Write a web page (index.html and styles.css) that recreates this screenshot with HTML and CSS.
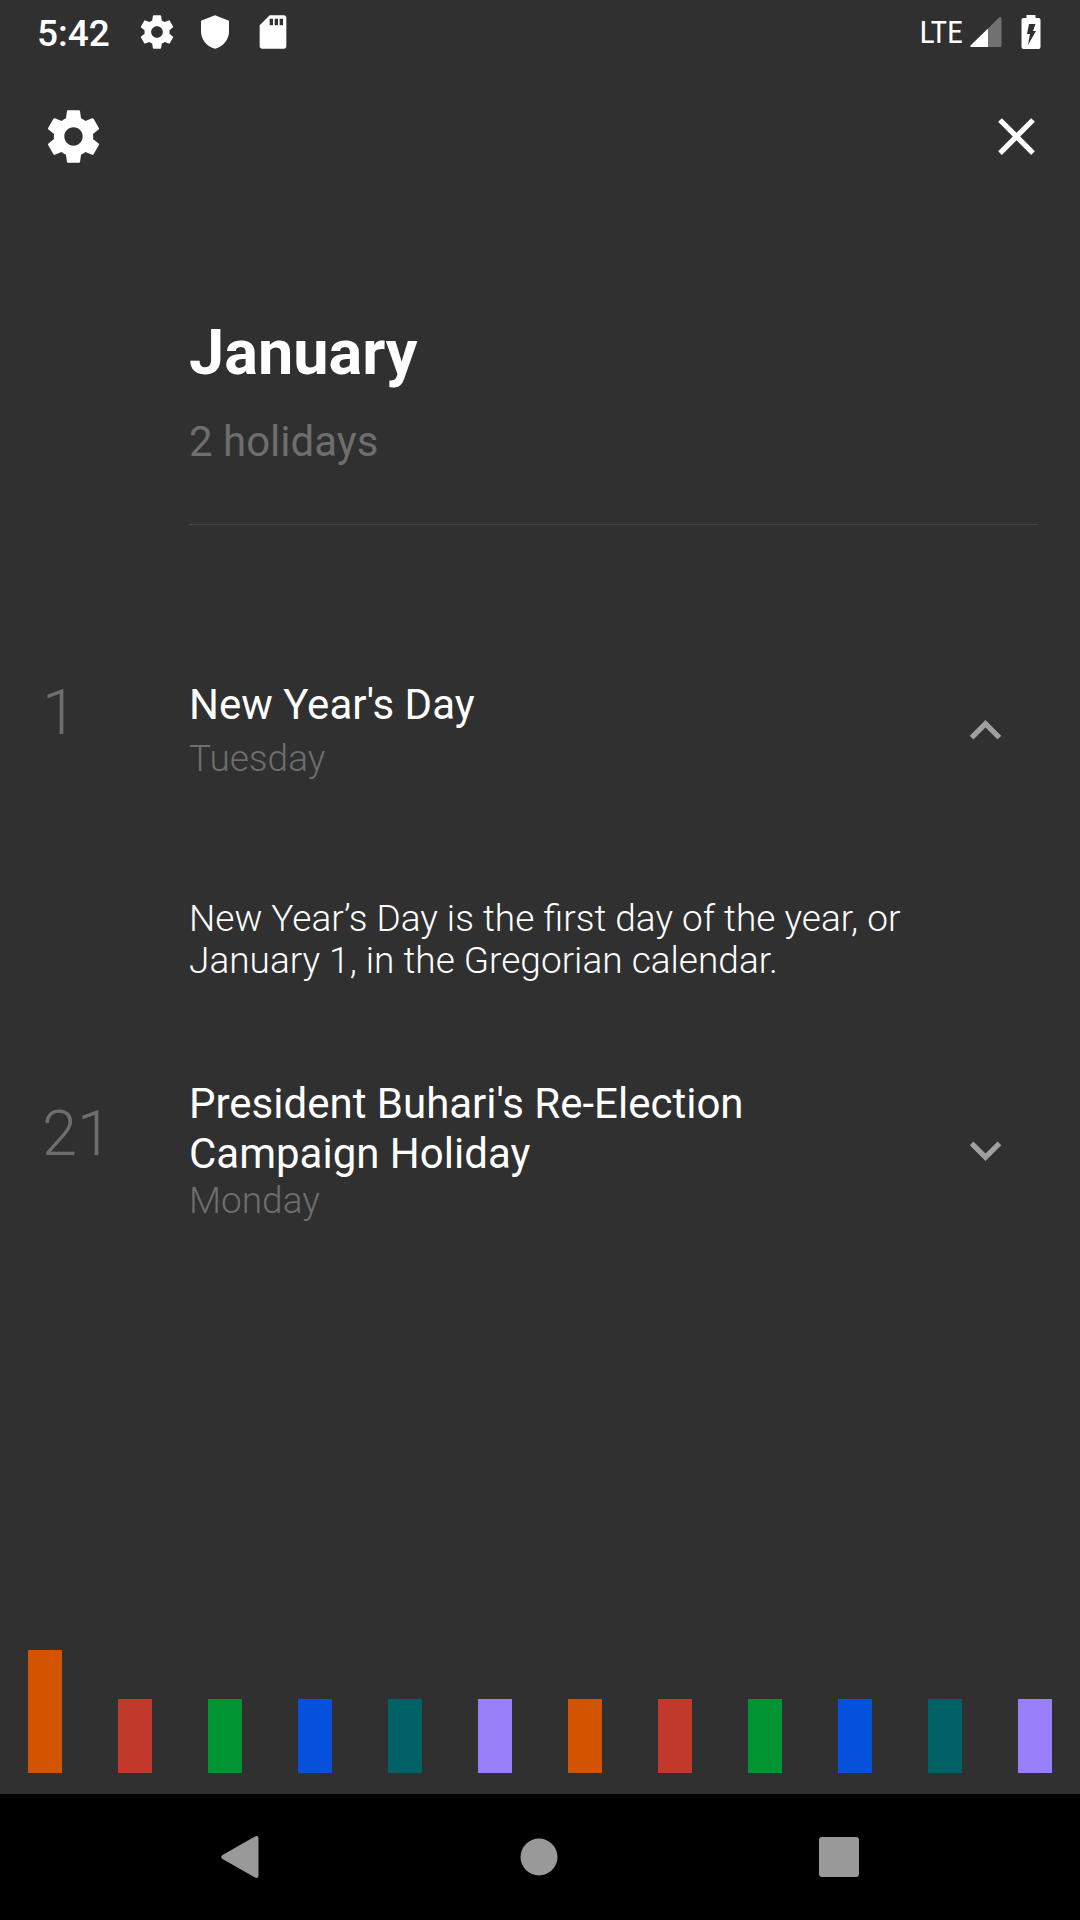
FILE: index.html
```html
<!DOCTYPE html>
<html lang="en">
<head>
<meta charset="utf-8">
<meta name="viewport" content="width=device-width, initial-scale=1">
<title>January holidays</title>
<link rel="stylesheet" href="styles.css">
</head>
<body>
<div class="screen">
  <header class="status-bar">
    <time class="clock">5:42</time>
    <div class="status-icons">
      <svg class="status-icon" viewBox="0 0 24 24" aria-hidden="true"><path d="M19.43 12.98c.04-.32.07-.64.07-.98s-.03-.66-.07-.98l2.11-1.65c.19-.15.24-.42.12-.64l-2-3.46c-.12-.22-.39-.3-.61-.22l-2.49 1c-.52-.4-1.08-.73-1.69-.98l-.38-2.65C14.46 2.18 14.25 2 14 2h-4c-.25 0-.46.18-.49.42l-.38 2.65c-.61.25-1.17.59-1.69.98l-2.49-1c-.23-.09-.49 0-.61.22l-2 3.46c-.13.22-.07.49.12.64l2.11 1.65c-.04.32-.07.65-.07.98s.03.66.07.98l-2.11 1.65c-.19.15-.24.42-.12.64l2 3.46c.12.22.39.3.61.22l2.49-1c.52.4 1.08.73 1.69.98l.38 2.65c.03.24.24.42.49.42h4c.25 0 .46-.18.49-.42l.38-2.65c.61-.25 1.17-.59 1.69-.98l2.49 1c.23.09.49 0 .61-.22l2-3.46c.12-.22.07-.49-.12-.64l-2.11-1.65zM12 15.5c-1.93 0-3.5-1.57-3.5-3.5s1.57-3.5 3.5-3.5 3.5 1.57 3.5 3.5-1.57 3.5-3.5 3.5z"/></svg>
      <svg class="status-icon" viewBox="0 0 24 24" aria-hidden="true"><path d="M12 2L3.6 5.2v6.3c0 4.900 3.400 9.200 8.400 10.500 5-1.300 8.400-5.600 8.400-10.500V5.200z"/></svg>
      <svg class="status-icon" viewBox="0 0 24 24" aria-hidden="true"><path fill-rule="evenodd" d="M18.500 2H10L4 8v12.500c0 .9.600 1.500 1.500 1.500h13c.9 0 1.500-.6 1.500-1.500v-17c0-.9-.6-1.500-1.500-1.500zM12 8h-2V4h2zm3 0h-2V4h2zm3 0h-2V4h2z"/></svg>
    </div>
    <span class="network">LTE</span>
    <svg class="signal" viewBox="0 0 32 32" role="img" aria-label="Signal strength"><path class="signal-off" d="M18 12.500L29 1.500Q31.500 0 31.500 2.500V29.500Q31.500 31 30 31H18z"/><path d="M18 12.500V31H1.500Q-.5 31 .5 29.500z"/></svg>
    <svg class="battery" viewBox="0 0 20 34" role="img" aria-label="Battery charging"><path fill-rule="evenodd" d="M5.500 0h9v3h3q2 0 2 2v27q0 2-2 2H2.500q-2 0-2-2V5q0-2 2-2h3zM8 9L6 19h3L7 30l8-14h-3l2.500-7z"/></svg>
  </header>

  <nav class="app-bar">
    <button class="icon-button" type="button" aria-label="Settings">
      <svg class="icon" viewBox="0 0 24 24" aria-hidden="true"><path d="M19.43 12.98c.04-.32.07-.64.07-.98s-.03-.66-.07-.98l2.11-1.65c.19-.15.24-.42.12-.64l-2-3.46c-.12-.22-.39-.3-.61-.22l-2.490 1c-.52-.4-1.080-.73-1.690-.98l-.38-2.650C14.460 2.180 14.250 2 14 2h-4c-.25 0-.46.18-.49.42l-.38 2.650c-.61.25-1.170.59-1.690.98l-2.490-1c-.23-.09-.49 0-.61.22l-2 3.460c-.13.22-.07.49.12.64l2.110 1.650c-.04.32-.07.65-.07.98s.03.66.07.98l-2.110 1.650c-.19.15-.24.42-.12.64l2 3.460c.12.22.39.3.61.22l2.490-1c.52.4 1.080.73 1.690.98l.38 2.650c.03.24.24.42.49.42h4c.25 0 .46-.18.49-.42l.38-2.650c.61-.25 1.170-.59 1.690-.98l2.490 1c.23.09.49 0 .61-.22l2-3.460c.12-.22.07-.49-.12-.64l-2.110-1.650zM12 15.500c-1.930 0-3.500-1.570-3.500-3.500s1.570-3.500 3.500-3.500 3.500 1.570 3.500 3.500-1.570 3.500-3.500 3.500z"/></svg>
    </button>
    <button class="icon-button" type="button" aria-label="Close">
      <svg class="icon" viewBox="0 0 24 24" aria-hidden="true"><path d="M19 6.410L17.590 5 12 10.590 6.410 5 5 6.410 10.590 12 5 17.590 6.410 19 12 13.410 17.590 19 19 17.590 13.410 12z"/></svg>
    </button>
  </nav>

  <main class="content">
    <section class="month">
      <h1 class="month-name">January</h1>
      <p class="month-count">2 holidays</p>
    </section>

    <ul class="holidays">
      <li>
        <div class="holiday">
          <span class="holiday-date">1</span>
          <div class="holiday-text">
            <h2 class="holiday-name">New Year's Day</h2>
            <p class="holiday-weekday">Tuesday</p>
          </div>
          <button class="icon-button toggle" type="button" aria-label="Collapse" aria-expanded="true">
            <svg class="icon" viewBox="0 0 24 24" aria-hidden="true"><path d="M7.410 15.410L12 10.830l4.590 4.580L18 14l-6-6-6 6z"/></svg>
          </button>
        </div>
        <p class="holiday-description">New Year’s Day is the first day of the year, or January 1, in the Gregorian calendar.</p>
      </li>
      <li>
        <div class="holiday">
          <span class="holiday-date">21</span>
          <div class="holiday-text">
            <h2 class="holiday-name">President Buhari's Re-Election Campaign Holiday</h2>
            <p class="holiday-weekday">Monday</p>
          </div>
          <button class="icon-button toggle" type="button" aria-label="Expand" aria-expanded="false">
            <svg class="icon" viewBox="0 0 24 24" aria-hidden="true"><path d="M7.410 8.590L12 13.170l4.590-4.580L18 10l-6 6-6-6z"/></svg>
          </button>
        </div>
      </li>
    </ul>
  </main>

  <nav class="months" aria-label="Months">
    <button class="month-tab orange current" type="button" aria-label="January"></button>
    <button class="month-tab red" type="button" aria-label="February"></button>
    <button class="month-tab green" type="button" aria-label="March"></button>
    <button class="month-tab blue" type="button" aria-label="April"></button>
    <button class="month-tab teal" type="button" aria-label="May"></button>
    <button class="month-tab purple" type="button" aria-label="June"></button>
    <button class="month-tab orange" type="button" aria-label="July"></button>
    <button class="month-tab red" type="button" aria-label="August"></button>
    <button class="month-tab green" type="button" aria-label="September"></button>
    <button class="month-tab blue" type="button" aria-label="October"></button>
    <button class="month-tab teal" type="button" aria-label="November"></button>
    <button class="month-tab purple" type="button" aria-label="December"></button>
  </nav>

  <footer class="system-nav">
    <button class="system-button" type="button" aria-label="Back">
      <svg class="system-icon" viewBox="0 0 42 42" aria-hidden="true"><path d="M36 .500Q39.500-1 39.500 2.500V39.500Q39.500 43 36 41.500L3.500 23Q1 21 3.500 19z"/></svg>
    </button>
    <button class="system-button" type="button" aria-label="Home">
      <svg class="system-icon" viewBox="0 0 42 42" aria-hidden="true"><circle cx="21" cy="21" r="18.500"/></svg>
    </button>
    <button class="system-button" type="button" aria-label="Recent apps">
      <svg class="system-icon" viewBox="0 0 42 42" aria-hidden="true"><rect x="1" y="1" width="40" height="40" rx="3"/></svg>
    </button>
  </footer>
</div>
</body>
</html>
```
FILE: styles.css
```css
* {
  box-sizing: border-box;
}

body,
h1,
h2,
p,
ul {
  margin: 0;
  padding: 0;
}

body {
  background: #303030;
  color: #fff;
  font-family: Roboto, sans-serif;
}

ul {
  list-style: none;
}

button {
  margin: 0;
  padding: 0;
  border: 0;
  background: none;
  color: inherit;
  cursor: pointer;
}

svg {
  display: block;
  flex: none;
  fill: currentColor;
}

.screen {
  display: flex;
  flex-direction: column;
  min-height: 100vh;
}

/* Status bar */
.status-bar {
  display: flex;
  align-items: center;
  height: 63px;
  padding: 0 39px 0 37px;
}

.clock {
  padding-top: 4px;
  font-size: 37px;
  font-weight: 500;
  line-height: 43px;
}

.status-icons {
  display: flex;
  flex: 1;
  gap: 18px;
  margin-left: 27px;
}

.status-icon {
  width: 40px;
  height: 40px;
}

.network {
  font-family: "Roboto Condensed", "Liberation Sans Narrow", Roboto, sans-serif;
  font-size: 32px;
  line-height: 38px;
}

.signal {
  width: 32px;
  height: 32px;
  margin: 0 19px 0 7px;
}

.signal-off {
  fill: #717171;
}

.battery {
  width: 20px;
  height: 34px;
}

/* App bar */
.app-bar {
  display: flex;
  align-items: center;
  justify-content: space-between;
  height: 147px;
  padding: 0 32px 0 42px;
}

.icon {
  width: 63px;
  height: 63px;
}

/* Month heading */
.content {
  flex: 1;
  padding: 106px 42px 42px;
}

.month {
  margin-left: 147px;
  padding-bottom: 57px;
  border-bottom: 1px solid #464646;
}

.month-name {
  font-size: 63px;
  font-weight: 700;
  line-height: 74px;
}

.month-count {
  margin-top: 27px;
  color: #6e6e6e;
  font-size: 42px;
  line-height: 50px;
}

/* Holiday list */
.holidays {
  display: flex;
  flex-direction: column;
  gap: 97px;
  margin-top: 151px;
}

.holiday {
  display: flex;
  align-items: center;
}

.holiday-date {
  flex: none;
  width: 147px;
  padding-bottom: 34px;
  color: #6e6e6e;
  font-size: 63px;
  font-weight: 300;
  line-height: 74px;
}

.holiday-text {
  display: flex;
  flex: 1;
  flex-direction: column;
  justify-content: space-between;
  min-height: 100px;
  padding-right: 42px;
}

.holiday-name {
  font-size: 42px;
  font-weight: 400;
  line-height: 50px;
}

.holiday-weekday {
  color: #6e6e6e;
  font-size: 37px;
  font-weight: 300;
  line-height: 43px;
}

.toggle {
  margin-right: 21px;
  color: #a0a0a0;
}

.holiday-description {
  margin: 114px 105px 0 147px;
  font-size: 37px;
  font-weight: 300;
  line-height: 42px;
}

/* Month picker */
.months {
  display: grid;
  grid-template-columns: repeat(12, 1fr);
  align-items: end;
  justify-items: center;
  padding-bottom: 21px;
}

.month-tab {
  width: 34px;
  height: 74px;
}

.current {
  height: 123px;
}

.orange {
  background: #d35400;
}

.red {
  background: #c0392b;
}

.green {
  background: #009432;
}

.blue {
  background: #0652dd;
}

.teal {
  background: #006266;
}

.purple {
  background: #9980fa;
}

/* System navigation */
.system-nav {
  display: grid;
  grid-template-columns: repeat(3, 1fr);
  height: 126px;
  padding: 0 91px 0 90px;
  background: #000;
  color: #999;
}

.system-button {
  display: grid;
  place-items: center;
}

.system-icon {
  width: 42px;
  height: 42px;
}
```
